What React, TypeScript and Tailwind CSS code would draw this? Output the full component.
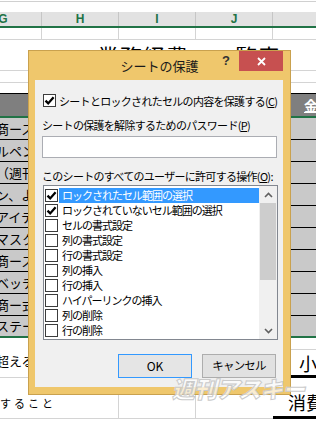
import React from "react";

const jp = "font-['Noto_Sans_CJK_JP',sans-serif]";

function Box({ checked }: { checked: boolean }) {
  return (
    <div className="w-[13px] h-[13px] border border-[#3c3c3c] bg-white flex items-center justify-center shrink-0">
      {checked && (
        <svg width="11" height="11" viewBox="0 0 11 11">
          <path d="M1.5 5.6 L4.2 8.4 L9.6 2.2" fill="none" stroke="#000" strokeWidth="2.3" />
        </svg>
      )}
    </div>
  );
}

function GridRow({ h, bottom }: { h: string; bottom?: string }) {
  return (
    <div className={`flex ml-[-35px] ${h}`}>
      {[0, 1, 2, 3, 4].map((i) => (
        <div key={i} className={`w-[77px] shrink-0 border-r border-r-[#d4d4d4] border-b ${bottom ?? "border-b-[#d4d4d4]"}`} />
      ))}
    </div>
  );
}

const items: [string, boolean][] = [
  ["ロックされたセル範囲の選択", true],
  ["ロックされていないセル範囲の選択", true],
  ["セルの書式設定", false],
  ["列の書式設定", false],
  ["行の書式設定", false],
  ["列の挿入", false],
  ["行の挿入", false],
  ["ハイパーリンクの挿入", false],
  ["列の削除", false],
  ["行の削除", false],
];

const leftTexts = ["商ース", "ルペン", "（週刊", "ン、よ", "アイテ", "マスク", "商ース", "ベッチ", "商ー式", "ステー"];

export default function App() {
  return (
    <div className={`relative w-[316px] h-[422px] overflow-hidden bg-white ${jp}`}>
      {/* top strip */}
      <div className="h-[12px] pt-px">
        <div className="border-t border-[#d0d0d0]" />
      </div>
      {/* column headers */}
      <div className="h-[14px] bg-[#e2e2e2] flex ml-[-35px]">
        {["G", "H", "I", "J", ""].map((c, i) => (
          <div
            key={i}
            className="w-[77px] shrink-0 border-r border-[#c6c6c6] text-center text-[12px] leading-[14px] font-bold text-[#217346] font-['Liberation_Sans',sans-serif]"
          >
            {c}
          </div>
        ))}
      </div>
      <div className="h-[2px] bg-[#217346]" />
      <GridRow h="h-[12px]" />
      {/* title row */}
      <div className="h-[31px] border-b border-[#d4d4d4] pl-[97px] flex items-center overflow-hidden">
        <span className="text-[22px] leading-[28px] tracking-[1px] text-black whitespace-nowrap">業務経費　一覧表</span>
      </div>
      <GridRow h="h-[12px]" />
      <GridRow h="h-[11px]" bottom="border-b-black" />
      {/* table header */}
      <div className="h-[22px] bg-[#7f7f7f] flex items-center overflow-hidden">
        <span className="ml-[304px] text-white text-[14px] font-bold underline leading-[20px] whitespace-nowrap">金額</span>
      </div>
      <div className="h-[2px] bg-[#217346]" />
      {leftTexts.map((t, i) => (
        <div
          key={i}
          className={`h-[22px] bg-[#c9c9c9] flex items-center overflow-hidden ${i === 9 ? "border-b-2 border-[#217346]" : "border-b border-black"}`}
        >
          <span className="ml-[-4px] text-[13px] leading-[16px] whitespace-nowrap text-black">{t}</span>
        </div>
      ))}
      {/* below table */}
      <div className="flex h-[40px] overflow-hidden">
        <div className="w-[119px] shrink-0 border-r border-b border-[#d4d4d4] flex items-center pt-[6px]">
          <span className="ml-[-4px] text-[13px] leading-[16px] text-black whitespace-nowrap">超える</span>
        </div>
        <div className="w-[77px] shrink-0 border-r border-b border-[#d4d4d4]" />
        <div className="w-[94px] shrink-0 border-b border-[#d4d4d4]" />
        <div className="flex-1 flex flex-col">
          <div className="h-[12px] border-b border-[#d4d4d4]" />
          <div className="flex-1 border-b-[3px] border-black flex items-end pl-[9px] overflow-hidden">
            <span className="text-[18px] leading-[24px] text-black whitespace-nowrap">小計</span>
          </div>
        </div>
      </div>
      <div className="flex h-[41px] overflow-hidden">
        <div className="w-[119px] shrink-0 border-r border-b border-[#d4d4d4] flex items-end pb-[8px]">
          <span className="text-[11px] leading-[14px] tracking-[3px] text-black whitespace-nowrap">すること</span>
        </div>
        <div className="w-[77px] shrink-0 border-r border-b border-[#d4d4d4]" />
        <div className="w-[77px] shrink-0 border-b border-[#d4d4d4]" />
        <div className="flex-1 border-b-[3px] border-black flex items-end pl-[15px] pb-[2px] overflow-hidden">
          <span className="text-[18px] leading-[24px] text-black whitespace-nowrap">消費税</span>
        </div>
      </div>

      {/* dialog */}
      <div className="absolute left-[28px] top-[50px] w-[263px] h-[345px] bg-[#efc76c] border border-[#c9a14e] flex flex-col">
        <div className="relative h-[29px] flex items-center justify-center shrink-0">
          <span className="text-[13px] text-[#1a1a1a] leading-[18px]">シートの保護</span>
          <div className="absolute right-[51px] top-0 w-[26px] h-[20px] flex items-center justify-center text-[13px] font-bold text-[#333] font-['Liberation_Sans',sans-serif]">
            ?
          </div>
          <div className="absolute right-[7px] top-0 w-[44px] h-[20px] bg-[#c75050] flex items-center justify-center">
            <svg width="9" height="9" viewBox="0 0 9 9">
              <path d="M1 1 L8 8 M8 1 L1 8" stroke="#fff" strokeWidth="1.8" />
            </svg>
          </div>
        </div>
        <div className="ml-[6px] w-[248px] h-[307px] bg-[#f0f0f0] pt-[14px] text-[11px] tracking-[-0.7px] text-black">
          <div className="flex items-center h-[13px] pl-[8px] gap-[3px]">
            <Box checked />
            <span className="leading-[14px] whitespace-nowrap">
              シートとロックされたセルの内容を保護する(<span className="underline">C</span>)
            </span>
          </div>
          <div className="mt-[11px] pl-[7px] leading-[14px] whitespace-nowrap">
            シートの保護を解除するためのパスワード(<span className="underline">P</span>)
          </div>
          <div className="mt-[4px] ml-[7px] w-[235px] h-[22px] bg-white border border-[#abadb3]" />
          <div className="mt-[11px] pl-[7px] leading-[14px] whitespace-nowrap">
            このシートのすべてのユーザーに許可する操作(<span className="underline">O</span>):
          </div>
          <div className="mt-[2px] ml-[8px] w-[235px] h-[155px] bg-white border border-[#828790] flex">
            <div className="flex-1 pt-[2px] overflow-hidden tracking-[-1px]">
              {items.map(([t, c], i) => (
                <div key={i} className="h-[15px] flex items-center pl-[1px]">
                  <Box checked={c} />
                  <div
                    className={`ml-[1px] flex-1 h-[15px] pl-[3px] leading-[15px] whitespace-nowrap ${i === 0 ? "bg-[#3399ff] text-white" : ""}`}
                  >
                    {t}
                  </div>
                </div>
              ))}
            </div>
            <div className="w-[18px] bg-[#f0f0f0] flex flex-col">
              <div className="h-[17px] flex items-center justify-center">
                <svg width="9" height="6" viewBox="0 0 9 6">
                  <path d="M1 5 L4.5 1.5 L8 5" fill="none" stroke="#606060" strokeWidth="1.6" />
                </svg>
              </div>
              <div className="mx-[1px] h-[77px] bg-[#cdcdcd]" />
              <div className="flex-1" />
              <div className="h-[17px] flex items-center justify-center">
                <svg width="9" height="6" viewBox="0 0 9 6">
                  <path d="M1 1 L4.5 4.5 L8 1" fill="none" stroke="#606060" strokeWidth="1.6" />
                </svg>
              </div>
            </div>
          </div>
          <div className="mt-[14px] flex pl-[83px] gap-[10px] tracking-normal">
            <div className="w-[74px] h-[24px] bg-[#e5e5e5] border border-[#3399ff] flex items-center justify-center text-[12px]">
              OK
            </div>
            <div className="w-[74px] h-[24px] bg-[#e1e1e1] border border-[#adadad] flex items-center justify-center text-[11.5px] tracking-[-0.8px]">
              キャンセル
            </div>
          </div>
        </div>
      </div>

      {/* watermark */}
      <div className="absolute left-[172px] top-[374px] text-[23px] font-black italic leading-[28px] tracking-[-1px] whitespace-nowrap text-[rgba(255,255,255,0.7)] [-webkit-text-stroke:1px_#cacaca]">
        週刊アスキー
      </div>
    </div>
  );
}
